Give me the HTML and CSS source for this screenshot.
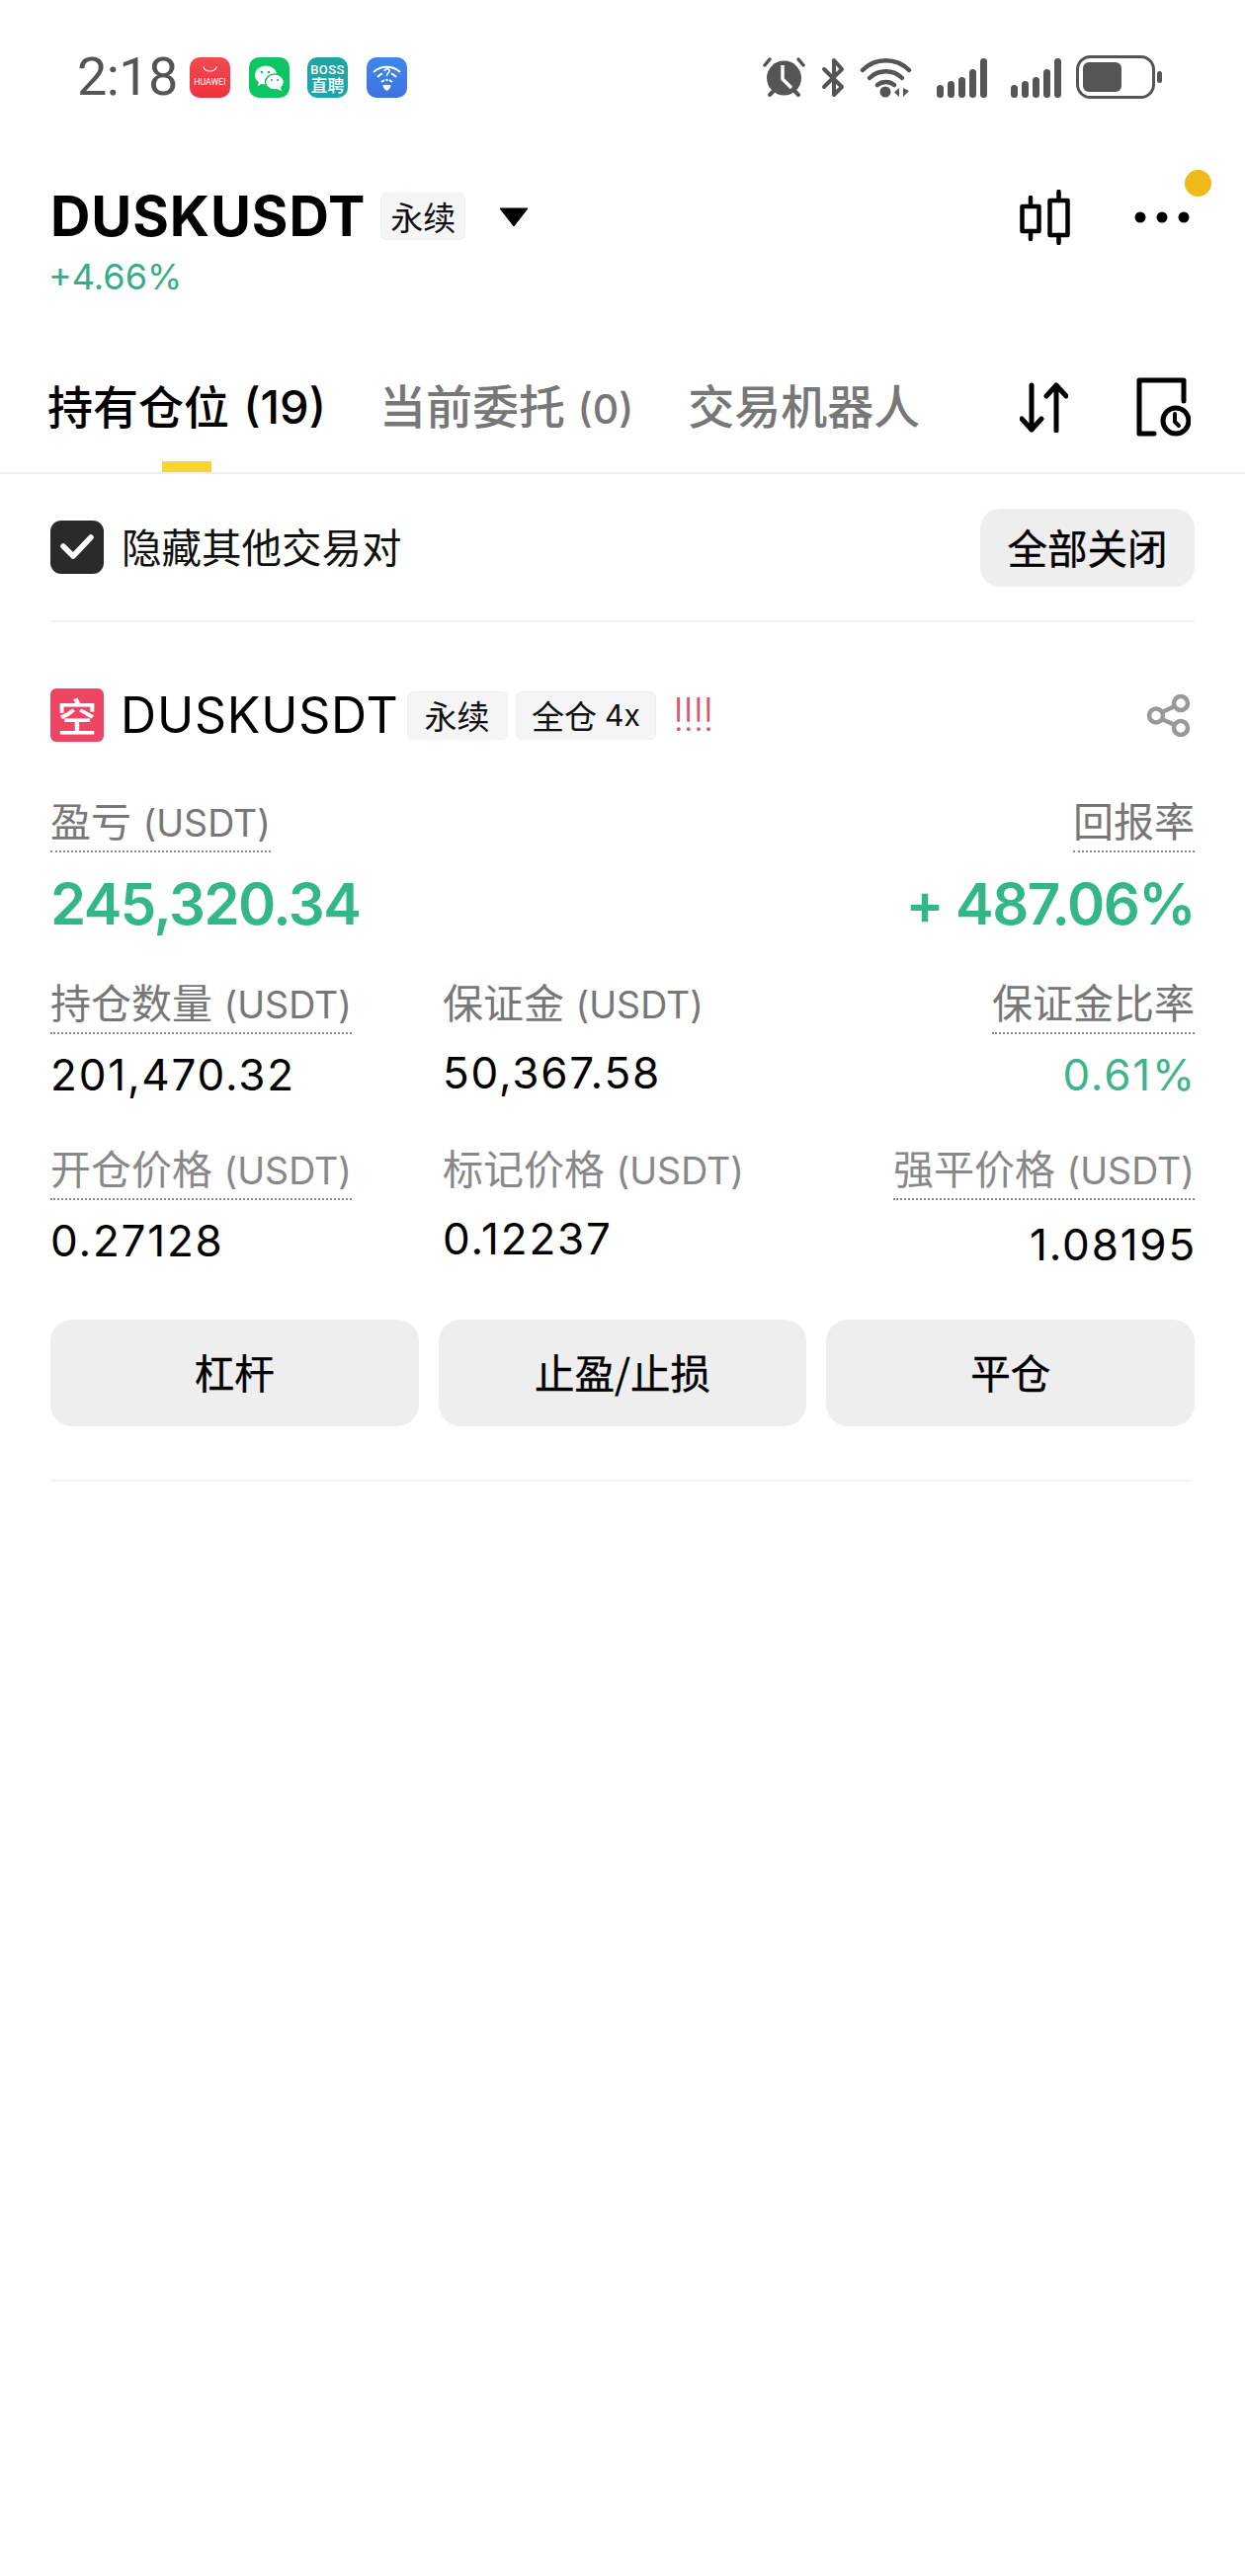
FILE: index.html
```html
<!DOCTYPE html>
<html lang="zh-CN">
<head>
<meta charset="utf-8">
<title>DUSKUSDT</title>
<link rel="stylesheet" href="styles.css">
</head>
<body>
<div class="status">
  <div class="status-left">
    <span class="time">2:18</span>
    <div class="apps">
      <svg class="app" viewBox="0 0 41 41"><defs><linearGradient id="hw" x1="0" y1="0" x2="0" y2="1"><stop offset="0" stop-color="#f04c50"/><stop offset="1" stop-color="#f0313f"/></linearGradient></defs><rect width="41" height="41" rx="10" fill="url(#hw)"/><path d="M14 9.5c1 6 12 6 13 0" fill="none" stroke="#fff" stroke-width="1.2"/><text x="20.5" y="28" class="app-hw">HUAWEI</text></svg>
      <svg class="app" viewBox="0 0 41 41"><rect width="41" height="41" rx="10" fill="#0ec564"/><ellipse cx="17" cy="18" rx="11" ry="9.5" fill="#fff"/><path d="M10 24l-1 5 6-3z" fill="#fff"/><ellipse cx="26" cy="25" rx="9.5" ry="8" fill="#fff" stroke="#0ec564" stroke-width="1.4"/><path d="M32 30l1 4-5-2z" fill="#fff"/><circle cx="13" cy="15" r="1.3" fill="#0ec564"/><circle cx="20" cy="15" r="1.3" fill="#0ec564"/><circle cx="23" cy="23" r="1.1" fill="#0ec564"/><circle cx="29" cy="23" r="1.1" fill="#0ec564"/></svg>
      <svg class="app" viewBox="0 0 41 41"><rect width="41" height="41" rx="10" fill="#1ea5a5"/><text x="20.5" y="17" class="app-boss">BOSS</text><text x="20.5" y="35" class="app-zp">直聘</text></svg>
      <svg class="app" viewBox="0 0 41 41"><defs><linearGradient id="wf" x1="0" y1="0" x2="0" y2="1"><stop offset="0" stop-color="#3f87ea"/><stop offset="1" stop-color="#3c74e2"/></linearGradient></defs><rect width="41" height="41" rx="10" fill="url(#wf)"/><g fill="none" stroke="#fff" stroke-width="2"><path d="M7 15c8-7 19-7 27 0"/><path d="M11 20c2-2 3-3 5-3.500"/><path d="M30 20c-2-2-3-3-5-3.500"/><path d="M15 25l3-2"/><path d="M26 25l-3-2"/><path d="M18 14c1-3 6-3 5 0 0 2-3 2-2.500 5" stroke-width="1.700"/></g><circle cx="20.500" cy="23" r="1.200" fill="#fff"/><path d="M16.500 28h8c0 3-2 5-4 6-2-1-4-3-4-6z" fill="#fff"/></svg>
    </div>
  </div>
  <div class="status-right">
    <svg class="i-alarm" viewBox="0 0 43 42"><circle cx="21.500" cy="22" r="17.500" fill="#555"/><path d="M2 9l5-6M41 9l-5-6" stroke="#555" stroke-width="3.500" stroke-linecap="round"/><path d="M7 39l4-4M36 39l-4-4" stroke="#555" stroke-width="4" stroke-linecap="round"/><path d="M20 9v14l9 9" fill="none" stroke="#fff" stroke-width="3.500"/></svg>
    <svg class="i-bt" viewBox="0 0 25 41"><path d="M3 12l18 18-8 8V24M3 30L21 12l-8-9v14" fill="none" stroke="#555" stroke-width="4" stroke-linecap="round" stroke-linejoin="round"/></svg>
    <svg class="i-wifi" viewBox="0 0 53 41"><g fill="none" stroke="#555" stroke-linecap="round" stroke-width="4.500"><path d="M3 13c13-13 34-13 47 0"/><path d="M10 21c9-9 24-9 33 0"/><path d="M18 28c5-4 12-4 17 0"/></g><circle cx="26" cy="35" r="5.500" fill="#555"/><path d="M40 31v9l-5-4.500zM44 31v9l6-6z" fill="#555"/></svg>
    <svg class="i-signal" viewBox="0 0 51 41"><g fill="#555"><rect x="0" y="28" width="7" height="13" rx="3.500"/><rect x="11" y="24" width="7" height="17" rx="3.500"/><rect x="22" y="20" width="7" height="21" rx="3.500"/><rect x="33" y="12" width="7" height="29" rx="3.500"/><rect x="44" y="1" width="7" height="40" rx="3.500"/></g></svg>
    <svg class="i-signal" viewBox="0 0 51 41"><g fill="#555"><rect x="0" y="28" width="7" height="13" rx="3.500"/><rect x="11" y="24" width="7" height="17" rx="3.500"/><rect x="22" y="20" width="7" height="21" rx="3.500"/><rect x="33" y="12" width="7" height="29" rx="3.500"/><rect x="44" y="1" width="7" height="40" rx="3.500"/></g></svg>
    <svg class="i-batt" viewBox="0 0 87 44"><rect x="1.500" y="1.500" width="77" height="41" rx="13" fill="none" stroke="#555" stroke-width="3"/><rect x="7" y="7" width="39" height="30" rx="6" fill="#555"/><rect x="82" y="16" width="5" height="12" rx="2.500" fill="#555"/></svg>
  </div>
</div>

<header class="header">
  <div class="title-wrap">
    <div class="title-row">
      <h1 class="title">DUSKUSDT</h1>
      <span class="tag tag-head">永续</span>
      <svg class="caret" viewBox="0 0 30 20"><path d="M1 1h28L15 19z" fill="#000" stroke="#000" stroke-linejoin="round"/></svg>
    </div>
    <div class="change">+4.66%</div>
  </div>
  <div class="actions">
    <svg class="i-candle" viewBox="0 0 51 56"><g fill="none" stroke="#000" stroke-width="4.500" stroke-linecap="round" stroke-linejoin="round"><rect x="2.500" y="17" width="17" height="25"/><path d="M11 8v9M11 42v8"/><rect x="30.500" y="11" width="18" height="35"/><path d="M39.500 2v9M39.500 46v8"/></g></svg>
    <div class="more">
      <svg class="i-more" viewBox="0 0 56 14"><circle cx="6" cy="7" r="5.500"/><circle cx="28" cy="7" r="5.500"/><circle cx="50" cy="7" r="5.500"/></svg>
      <span class="dot"></span>
    </div>
  </div>
</header>

<nav class="tabs">
  <span class="tab tab-active">持有仓位 <span class="tab-count">(19)</span></span>
  <span class="tab">当前委托 <span class="tab-count">(0)</span></span>
  <span class="tab">交易机器人</span>
  <div class="tab-icons">
    <svg class="i-swap" viewBox="0 0 49 51"><path d="M12 3v45M2 37l10 11 10-11M37 49V3M27 14L37 3l10 11" fill="none" stroke="#000" stroke-width="5" stroke-linecap="round" stroke-linejoin="round"/></svg>
    <svg class="i-hist" viewBox="0 0 55 60"><g fill="none" stroke="#000" stroke-width="5" stroke-linecap="round" stroke-linejoin="round"><path d="M48 24V3H3v54h15"/><circle cx="40" cy="44" r="13"/><path d="M39 37v8l4 4" stroke-width="4"/></g></svg>
  </div>
</nav>

<section class="toolbar">
  <label class="check-label">
    <svg class="check" viewBox="0 0 54 54"><rect width="54" height="54" rx="11" fill="#2a2a2c"/><path d="M13 26l10 10 18-19" fill="none" stroke="#fff" stroke-width="5.500" stroke-linecap="round" stroke-linejoin="round"/></svg>
    <span class="check-text">隐藏其他交易对</span>
  </label>
  <button class="close-all">全部关闭</button>
</section>

<section class="position">
  <div class="pos-head">
    <span class="side">空</span>
    <span class="pos-name">DUSKUSDT</span>
    <span class="tag">永续</span>
    <span class="tag tag-mode">全仓 <span class="tag-lev">4x</span></span>
    <span class="warn">!!!!</span>
    <svg class="i-share" viewBox="0 0 45 43"><g fill="none" stroke="#999" stroke-width="4.500"><circle cx="35" cy="9" r="7"/><circle cx="10" cy="21.500" r="7"/><circle cx="35" cy="34" r="7"/><path d="M16 18l13-6M16 25l13 6"/></g></svg>
  </div>

  <div class="pnl-row">
    <div class="stat">
      <span class="label">盈亏 <span class="unit">(USDT)</span></span>
      <span class="pnl">245,320.34</span>
    </div>
    <div class="stat stat-end">
      <span class="label">回报率</span>
      <span class="pnl">+ 487.06%</span>
    </div>
  </div>

  <div class="grid">
    <div class="stat">
      <span class="label">持仓数量 <span class="unit">(USDT)</span></span>
      <span class="value">201,470.32</span>
    </div>
    <div class="stat">
      <span class="label label-plain">保证金 <span class="unit">(USDT)</span></span>
      <span class="value value-up">50,367.58</span>
    </div>
    <div class="stat stat-end">
      <span class="label">保证金比率</span>
      <span class="value value-green">0.61%</span>
    </div>
    <div class="stat">
      <span class="label label-soft">开仓价格 <span class="unit">(USDT)</span></span>
      <span class="value">0.27128</span>
    </div>
    <div class="stat">
      <span class="label label-plain label-soft">标记价格 <span class="unit">(USDT)</span></span>
      <span class="value value-up">0.12237</span>
    </div>
    <div class="stat stat-end">
      <span class="label label-soft">强平价格 <span class="unit">(USDT)</span></span>
      <span class="value value-down">1.08195</span>
    </div>
  </div>

  <div class="buttons">
    <button class="btn">杠杆</button>
    <button class="btn">止盈/止损</button>
    <button class="btn">平仓</button>
  </div>
</section>
<div class="end-line"></div>
</body>
</html>
```
FILE: styles.css
```css
* { box-sizing: border-box; }
html, body { margin: 0; padding: 0; background: #fff; }
body {
  width: 1260px;
  height: 2608px;
  padding-top: 56px;
  overflow: hidden;
  color: #000;
  font-family: Inter, "Noto Sans CJK SC", sans-serif;
}
svg { display: block; flex: none; }

/* status bar */
.status {
  display: flex;
  justify-content: space-between;
  align-items: center;
  height: 44px;
  padding: 0 84px 0 78px;
}
.status-left, .status-right, .apps { display: flex; align-items: center; }
.time { font-family: Roboto, sans-serif; font-size: 54px; font-weight: 400; line-height: 44px; color: #555; width: 114px; letter-spacing: -.6px; }
.apps { gap: 18.500px; }
.app { width: 41px; height: 41px; }
.app-hw { font: 8.800px Roboto, sans-serif; fill: #fff; text-anchor: middle; }
.app-boss { font: 500 13px Roboto, sans-serif; fill: #fff; text-anchor: middle; letter-spacing: .4px; }
.app-zp { font: 500 17px "Noto Sans CJK SC", sans-serif; fill: #fff; text-anchor: middle; }
.i-alarm { width: 43px; height: 42px; margin-right: 16px; }
.i-bt { width: 25px; height: 41px; margin-right: 14px; }
.i-wifi { width: 53px; height: 41px; margin-right: 25px; }
.i-signal { width: 51px; height: 41px; margin-right: 24px; }
.i-signal + .i-signal { margin-right: 15px; }
.i-batt { width: 87px; height: 44px; }

/* header */
.header {
  display: flex;
  justify-content: space-between;
  align-items: flex-start;
  padding: 95px 56px 0 51px;
}
.title-row { display: flex; align-items: center; height: 48px; }
.title { margin: 0; font-size: 56px; line-height: 48px; font-weight: 700; letter-spacing: .9px; }
.tag {
  display: inline-flex;
  align-items: center;
  justify-content: center;
  height: 49px;
  padding: 0 17px;
  background: #f5f5f5;
  border: 1px solid #efefef;
  border-radius: 6px;
  font-size: 33px;
  color: #111;
  white-space: nowrap;
}
.tag-head { height: 48px; padding: 0 9px; margin-left: 15px; }
.tag-lev { margin-left: 8px; font-size: 30px; }
.caret { width: 30px; height: 20px; margin-left: 34px; margin-top: 2px; }
.change { margin-top: 17px; margin-left: -2px; font-size: 36px; line-height: 40px; color: #38ab8b; }
.actions { display: flex; align-items: center; gap: 65px; margin-top: -3px; }
.i-candle { width: 51px; height: 56px; }
.more { position: relative; }
.i-more { width: 56px; height: 14px; fill: #000; }
.dot {
  position: absolute;
  left: 51px;
  top: -41px;
  width: 27px;
  height: 27px;
  border-radius: 50%;
  background: #eeb919;
}

/* tabs */
.tabs {
  display: flex;
  align-items: flex-start;
  height: 112px;
  margin-top: 68px;
  padding: 0 55px 0 48px;
  border-bottom: 2px solid #f0f0f0;
  font-size: 47px;
  line-height: 88px;
  font-weight: 500;
}
.tab { position: relative; color: #777; margin-right: 55px; white-space: nowrap; }
.tab-active { color: #000; font-size: 46px; margin-right: 54px; }
.tab-active::after {
  content: "";
  position: absolute;
  left: 116px;
  top: 99px;
  width: 50px;
  height: 11px;
  background: #fbd52f;
}
.tab-count { font-size: 41px; }
.tab-active .tab-count { font-size: 47px; margin-left: 2px; }
.tab-icons { display: flex; align-items: center; gap: 69px; margin-left: auto; height: 88px; }
.i-swap { width: 49px; height: 51px; }
.i-hist { width: 55px; height: 60px; }

/* toolbar */
.toolbar {
  display: flex;
  justify-content: space-between;
  align-items: center;
  height: 150px;
  margin: 0 51px;
  border-bottom: 2px solid #f0f0f0;
}
.check-label { display: flex; align-items: center; gap: 18px; font-size: 40.500px; color: #111; }
.check-text { padding-bottom: 4px; }
.check { width: 54px; height: 54px; }
.close-all {
  width: 217px;
  height: 79px;
  padding: 0 0 2px;
  border: 0;
  border-radius: 20px;
  background: #eee;
  font: 400 40.500px "Noto Sans CJK SC", sans-serif;
  -webkit-text-stroke: .4px #000;
  color: #000;
}

/* position card */
.position { padding: 67px 51px 0; }
.pos-head { display: flex; align-items: center; height: 54px; }
.side {
  display: flex;
  align-items: center;
  justify-content: center;
  width: 54px;
  height: 54px;
  border-radius: 6px;
  background: #ef4565;
  color: #fff;
  font-size: 40px;
  font-weight: 500;
  font-family: "Noto Sans CJK SC", sans-serif;
}
.pos-name { margin-left: 17px; font-size: 50px; line-height: 54px; letter-spacing: .8px; color: #000; }
.pos-head .tag { margin-left: 8px; }
.tag-mode { padding: 0 15.500px; }
.warn { margin-left: 17px; font: 300 48px/54px Roboto, sans-serif; color: #d9566f; letter-spacing: -.8px; }
.i-share { width: 45px; height: 43px; margin-left: auto; margin-right: 4px; }

.pnl-row { display: flex; justify-content: space-between; margin-top: 55px; }
.stat { display: flex; flex-direction: column; align-items: flex-start; }
.stat-end { align-items: flex-end; }
.label {
  height: 57px;
  font-size: 41px;
  line-height: 52px;
  color: #777;
  border-bottom: 2px dotted #888;
  white-space: nowrap;
}
.label-plain { border-bottom-color: transparent; }
.label-soft { color: #888; }
.unit { font-size: 37.500px; }
.pnl { margin-top: 17px; font-size: 58px; line-height: 70px; font-weight: 600; letter-spacing: -1.500px; color: #33b688; white-space: nowrap; }

.grid {
  display: grid;
  grid-template-columns: 397px 1fr auto;
  row-gap: 40px;
  margin-top: 40px;
}
.value { margin-top: 11px; font-size: 44px; line-height: 60px; letter-spacing: 1.800px; color: #000; }
.stat-end .value { margin-right: -2px; }
.value-up { margin-top: 9px; }
.value-down { margin-top: 15px; }
.value-green { color: #3db48e; }

.buttons { display: flex; gap: 20px; margin-top: 46px; }
.btn {
  flex: 1;
  height: 108px;
  padding: 0 0 3px;
  border: 0;
  border-radius: 22px;
  background: #eee;
  font: 400 40.500px "Noto Sans CJK SC", sans-serif;
  -webkit-text-stroke: .4px #000;
  color: #000;
}
.end-line { height: 2px; margin: 54px 55px 0 52px; background: #f3f3f3; }
```
